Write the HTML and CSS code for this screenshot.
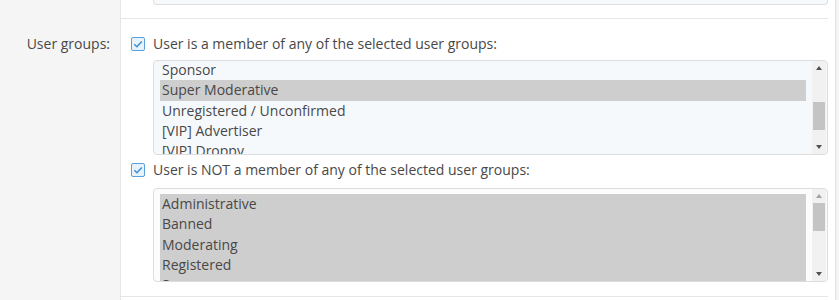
FILE: index.html
```html
<!DOCTYPE html>
<html>
<head>
<meta charset="UTF-8">
<title>User criteria</title>
<link rel="stylesheet" href="styles.css">
</head>
<body>
<div class="form">
    <div class="form-label"></div>
    <div class="form-cell">
        <div class="form-field first">
            <div class="listbox-stub"><span>Unbanned</span></div>
        </div>
    </div>

    <div class="form-label"><span class="label-text">User groups:</span></div>
    <div class="form-cell">
        <div class="form-field">
            <label class="check">
                <svg class="check-box" width="14" height="14" viewBox="0 0 14 14">
                    <rect x="0.5" y="0.5" width="13" height="13" rx="1.5" fill="#e8f2fb" stroke="#5aa0da"/>
                    <path d="M3.3 7.2 L5.9 9.7 L10.8 4.4" fill="none" stroke="#3d8fd6" stroke-width="1.5"/>
                </svg>
                User is a member of any of the selected user groups:
            </label>
            <div class="listbox tinted">
                <div class="listbox-items scrolled">
                    <div class="option">Sponsor</div>
                    <div class="option selected">Super Moderative</div>
                    <div class="option">Unregistered / Unconfirmed</div>
                    <div class="option">[VIP] Advertiser</div>
                    <div class="option">[VIP] Droppy</div>
                </div>
                <div class="scrollbar">
                    <span class="arrow up"></span>
                    <div class="track"><div class="thumb thumb-mid"></div></div>
                    <span class="arrow down"></span>
                </div>
            </div>

            <label class="check second">
                <svg class="check-box" width="14" height="14" viewBox="0 0 14 14">
                    <rect x="0.5" y="0.5" width="13" height="13" rx="1.5" fill="#e8f2fb" stroke="#5aa0da"/>
                    <path d="M3.3 7.2 L5.9 9.7 L10.8 4.4" fill="none" stroke="#3d8fd6" stroke-width="1.5"/>
                </svg>
                User is NOT a member of any of the selected user groups:
            </label>
            <div class="listbox plain">
                <div class="listbox-items">
                    <div class="option selected">Administrative</div>
                    <div class="option selected">Banned</div>
                    <div class="option selected">Moderating</div>
                    <div class="option selected">Registered</div>
                    <div class="option selected">Sponsor</div>
                </div>
                <div class="scrollbar">
                    <span class="arrow up disabled"></span>
                    <div class="track"><div class="thumb"></div></div>
                    <span class="arrow down"></span>
                </div>
            </div>
        </div>
    </div>

    <div class="form-label"></div>
    <div class="form-cell">
        <div class="form-field last"></div>
    </div>
</div>
</body>
</html>
```

FILE: styles.css
```css
body {
    margin: 0;
    padding: 0;
    background-color: #f5f5f5;
    font-family: "Open Sans", "Noto Sans", sans-serif;
    font-size: 14px;
    color: #484848;
}
.form {
    display: grid;
    grid-template-columns: 121px 1fr;
    grid-template-rows: auto auto 1fr;
    width: 836px;
    height: 300px;
    overflow: hidden;
    box-sizing: border-box;
    border-right: 1px solid #e2e2e2;
}
.form-label {
    background-color: #f5f5f5;
    border-right: 1px solid #e6e6e6;
    text-align: right;
    padding-right: 10px;
}
.label-text {
    display: block;
    margin-top: 15px;
    line-height: 20px;
}
.form-cell {
    background-color: white;
    padding-right: 7px;
}
.form-field {
    padding-left: 10px;
    border-bottom: 1px solid #e6e6e6;
}
.form-field.first {
    height: 19px;
    box-sizing: border-box;
}
.form-field.last {
    border-bottom: none;
    height: 4px;
}
.listbox-stub {
    margin-left: 22px;
    height: 4px;
    overflow: hidden;
    border: 1px solid #e0e0e0;
    border-top: none;
    border-radius: 0 0 4px 4px;
    background-color: #f7fafc;
    color: #9a9a9a;
}
.listbox-stub span {
    display: block;
    margin-top: -16px;
    padding-left: 8px;
    line-height: 20px;
}
.check {
    display: flex;
    align-items: center;
    gap: 8px;
    line-height: 20px;
    margin-top: 15px;
}
.check.second {
    margin-top: 5px;
}
.check-box {
    flex-shrink: 0;
}
.listbox {
    display: flex;
    margin-left: 22px;
    margin-top: 6px;
    height: 95px;
    box-sizing: border-box;
    border: 1px solid #dddddd;
    border-radius: 4px;
    overflow: hidden;
}
.listbox.tinted {
    background-color: #f6f9fc;
}
.listbox.plain {
    background-color: #fcfcfc;
    height: 94px;
    margin-top: 8px;
    margin-bottom: 14px;
}
.listbox-items {
    flex-grow: 1;
    padding: 5px 6px 0 6px;
    overflow: hidden;
}
.listbox-items.scrolled {
    padding-top: 0;
    margin-top: -1px;
}
.option {
    height: 20.3px;
    line-height: 20.3px;
    padding-left: 2px;
    white-space: nowrap;
}
.option.selected {
    background-color: #cecece;
}
.scrollbar {
    width: 14px;
    margin-right: 1px;
    display: flex;
    flex-direction: column;
    background-color: #f1f1f1;
}
.arrow {
    height: 14px;
    position: relative;
}
.arrow::after {
    content: "";
    position: absolute;
    left: 4px;
    top: 5px;
    border-left: 3px solid transparent;
    border-right: 3px solid transparent;
}
.arrow.up::after {
    border-bottom: 4px solid #505050;
}
.arrow.down::after {
    border-top: 4px solid #505050;
}
.arrow.up.disabled::after {
    border-bottom-color: #a3a3a3;
}
.track {
    flex-grow: 1;
}
.thumb {
    height: 28px;
    margin: 0 1px;
    background-color: #c4c4c4;
}
.thumb-mid {
    margin-top: 27px;
}
```
